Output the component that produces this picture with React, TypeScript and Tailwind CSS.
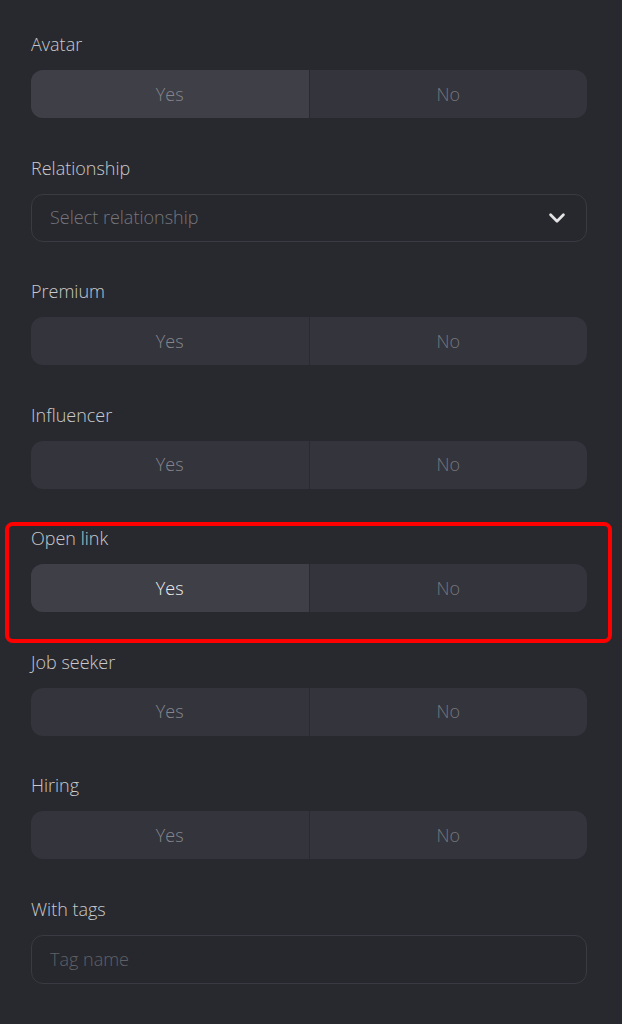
import React, { useState } from 'react';

type Choice = 'yes' | 'no' | null;

function Toggle({ value, onChange, dim }: { value: Choice; onChange: (v: Choice) => void; dim?: boolean }) {
  const yesActive = value === 'yes';
  return (
    <div className="flex h-[48px] w-full overflow-hidden rounded-[12px] bg-[#33343c]">
      <button
        type="button"
        onClick={() => onChange('yes')}
        className={`flex-1 text-[18px] ${yesActive ? 'bg-[#3e3f47]' : ''} ${
          yesActive && !dim ? 'text-[#ececee]' : 'text-[#85868c]'
        }`}
      >
        Yes
      </button>
      <div className="w-px bg-[#2a2b31]" />
      <button type="button" onClick={() => onChange('no')} className="flex-1 text-[18px] text-[#76777d]">
        No
      </button>
    </div>
  );
}

function Label({ children }: { children: React.ReactNode }) {
  return <div className="mb-[14px] h-[24px] text-[18px] leading-[24px] text-[#c9c9cd]">{children}</div>;
}

export default function App() {
  const [avatar, setAvatar] = useState<Choice>('yes');
  const [premium, setPremium] = useState<Choice>(null);
  const [influencer, setInfluencer] = useState<Choice>(null);
  const [openLink, setOpenLink] = useState<Choice>('yes');
  const [jobSeeker, setJobSeeker] = useState<Choice>(null);
  const [hiring, setHiring] = useState<Choice>(null);

  return (
    <div
      className="min-h-[1024px] w-full bg-[#28292e] pl-[31px] pr-[35px] pt-[32px] font-light"
      style={{ fontFamily: '"Open Sans", "Noto Sans", sans-serif' }}
    >
      <div className="flex flex-col gap-[37.5px]">
        <div>
          <Label>Avatar</Label>
          <Toggle value={avatar} onChange={setAvatar} dim />
        </div>

        <div>
          <Label>Relationship</Label>
          <button
            type="button"
            className="flex h-[48px] w-full items-center justify-between rounded-[12px] border border-[#3a3b42] bg-[#27282d] pl-[18px] pr-[18px] text-left"
          >
            <span className="text-[18px] text-[#75767c]">Select relationship</span>
            <svg width="22" height="22" viewBox="0 0 24 24" fill="none" stroke="#e4e4e6" strokeWidth="3" strokeLinecap="round" strokeLinejoin="round">
              <path d="M5 8.5l7 7 7-7" />
            </svg>
          </button>
        </div>

        <div>
          <Label>Premium</Label>
          <Toggle value={premium} onChange={setPremium} />
        </div>

        <div>
          <Label>Influencer</Label>
          <Toggle value={influencer} onChange={setInfluencer} />
        </div>

        <div className="relative">
          <div className="pointer-events-none absolute -left-[26px] -right-[25px] -top-[4px] h-[121px] rounded-[8px] border-[4px] border-[#ff0000]" />
          <Label>Open link</Label>
          <Toggle value={openLink} onChange={setOpenLink} />
        </div>

        <div>
          <Label>Job seeker</Label>
          <Toggle value={jobSeeker} onChange={setJobSeeker} />
        </div>

        <div>
          <Label>Hiring</Label>
          <Toggle value={hiring} onChange={setHiring} />
        </div>

        <div>
          <Label>With tags</Label>
          <input
            type="text"
            placeholder="Tag name"
            className="h-[49px] w-full rounded-[12px] border border-[#3a3b42] bg-[#27282d] px-[18px] text-[18px] text-[#c9c9cd] outline-none placeholder:text-[#5f6066]"
          />
        </div>
      </div>
    </div>
  );
}
